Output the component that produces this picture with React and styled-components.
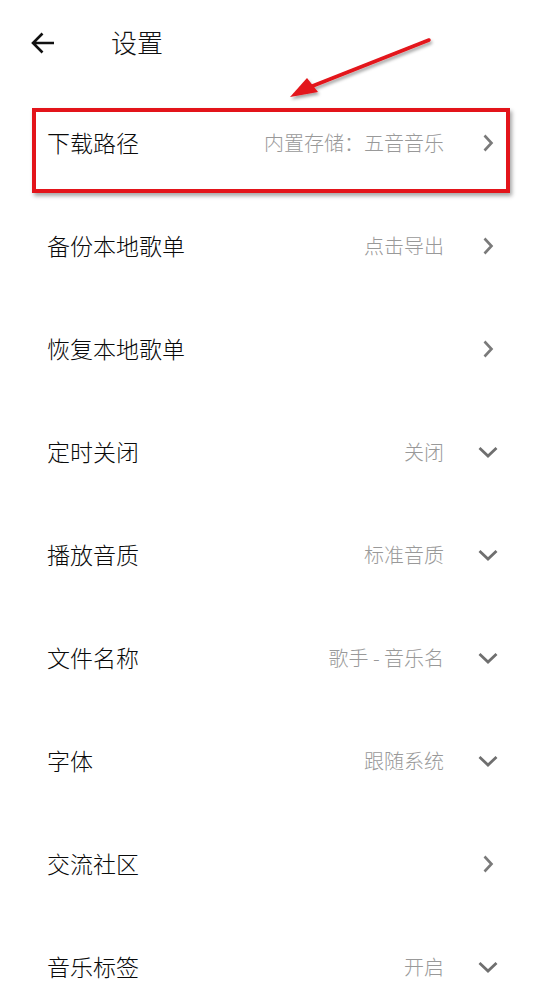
import React from "react";
import styled, { createGlobalStyle } from "styled-components";

const Global = createGlobalStyle`
  html, body { margin: 0; padding: 0; background: #fff; }
  body { font-family: "Noto Sans CJK SC", "Noto Sans", sans-serif; }
`;

const Page = styled.div`
  position: relative;
  width: 552px;
  height: 981px;
  overflow: hidden;
  background: #fff;
`;

const Header = styled.header`
  height: 91px;
  display: flex;
  align-items: center;
  padding-left: 30px;
  padding-bottom: 6px;
  box-sizing: border-box;
`;

const BackButton = styled.div`
  width: 26px;
  height: 26px;
  display: flex;
  align-items: center;
  justify-content: center;
  margin-right: 55px;
`;

const Title = styled.h1`
  margin: 0 0 2px 0;
  font-size: 26px;
  font-weight: 300;
  color: #111;
  line-height: 1;
`;

const List = styled.div`
  display: flex;
  flex-direction: column;
`;

const Row = styled.div`
  height: 103px;
  display: flex;
  align-items: center;
  padding: 0 54px 0 47px;
`;

const Label = styled.span`
  flex: 1;
  font-size: 23px;
  font-weight: 300;
  color: #0a0a0a;
  line-height: 1;
`;

const Value = styled.span`
  font-size: 20px;
  font-weight: 300;
  color: #999;
  line-height: 1;
  margin-right: 34px;
`;

const IconBox = styled.div`
  width: 20px;
  display: flex;
  justify-content: center;
  align-items: center;
`;

const Highlight = styled.div`
  position: absolute;
  left: 32px;
  top: 108px;
  width: 478px;
  height: 85px;
  box-sizing: border-box;
  border: 4px solid #e3141a;
  box-shadow: 2px 3px 4px rgba(0, 0, 0, 0.35);
  pointer-events: none;
`;

const ArrowLayer = styled.svg`
  position: absolute;
  left: 0;
  top: 0;
  pointer-events: none;
`;

const ChevronRight = () => (
  <svg width="12" height="18" viewBox="0 0 12 18">
    <path d="M2.5 1.5 L9.5 9 L2.5 16.5" fill="none" stroke="#7a7a7a" strokeWidth="2.6" />
  </svg>
);

const ChevronDown = () => (
  <svg width="20" height="12" viewBox="0 0 20 12">
    <path d="M1.5 2 L10 10 L18.5 2" fill="none" stroke="#6f6f6f" strokeWidth="2.8" />
  </svg>
);

const items = [
  { label: "下载路径", value: "内置存储：五音音乐", icon: "right" },
  { label: "备份本地歌单", value: "点击导出", icon: "right" },
  { label: "恢复本地歌单", value: "", icon: "right" },
  { label: "定时关闭", value: "关闭", icon: "down" },
  { label: "播放音质", value: "标准音质", icon: "down" },
  { label: "文件名称", value: "歌手 - 音乐名", icon: "down" },
  { label: "字体", value: "跟随系统", icon: "down" },
  { label: "交流社区", value: "", icon: "right" },
  { label: "音乐标签", value: "开启", icon: "down" },
];

export default function App() {
  return (
    <Page>
      <Global />
      <Header>
        <BackButton>
          <svg width="26" height="24" viewBox="0 0 26 24">
            <path d="M24 12 H3 M12.5 2.5 L3 12 L12.5 21.5" fill="none" stroke="#111" strokeWidth="2.6" />
          </svg>
        </BackButton>
        <Title>设置</Title>
      </Header>
      <List>
        {items.map((it) => (
          <Row key={it.label}>
            <Label>{it.label}</Label>
            {it.value && <Value>{it.value}</Value>}
            <IconBox>{it.icon === "right" ? <ChevronRight /> : <ChevronDown />}</IconBox>
          </Row>
        ))}
      </List>
      <Highlight />
      <ArrowLayer width="552" height="120" viewBox="0 0 552 120">
        <defs>
          <filter id="sh" x="-20%" y="-50%" width="140%" height="200%">
            <feDropShadow dx="1.5" dy="2.5" stdDeviation="1.5" floodColor="#000" floodOpacity="0.35" />
          </filter>
        </defs>
        <g filter="url(#sh)">
          <path d="M429 40 L310 87" stroke="#e3141a" strokeWidth="3.5" strokeLinecap="round" fill="none" />
          <path d="M290 97 L307 78 L318 92 Z" fill="#e3141a" />
        </g>
      </ArrowLayer>
    </Page>
  );
}
